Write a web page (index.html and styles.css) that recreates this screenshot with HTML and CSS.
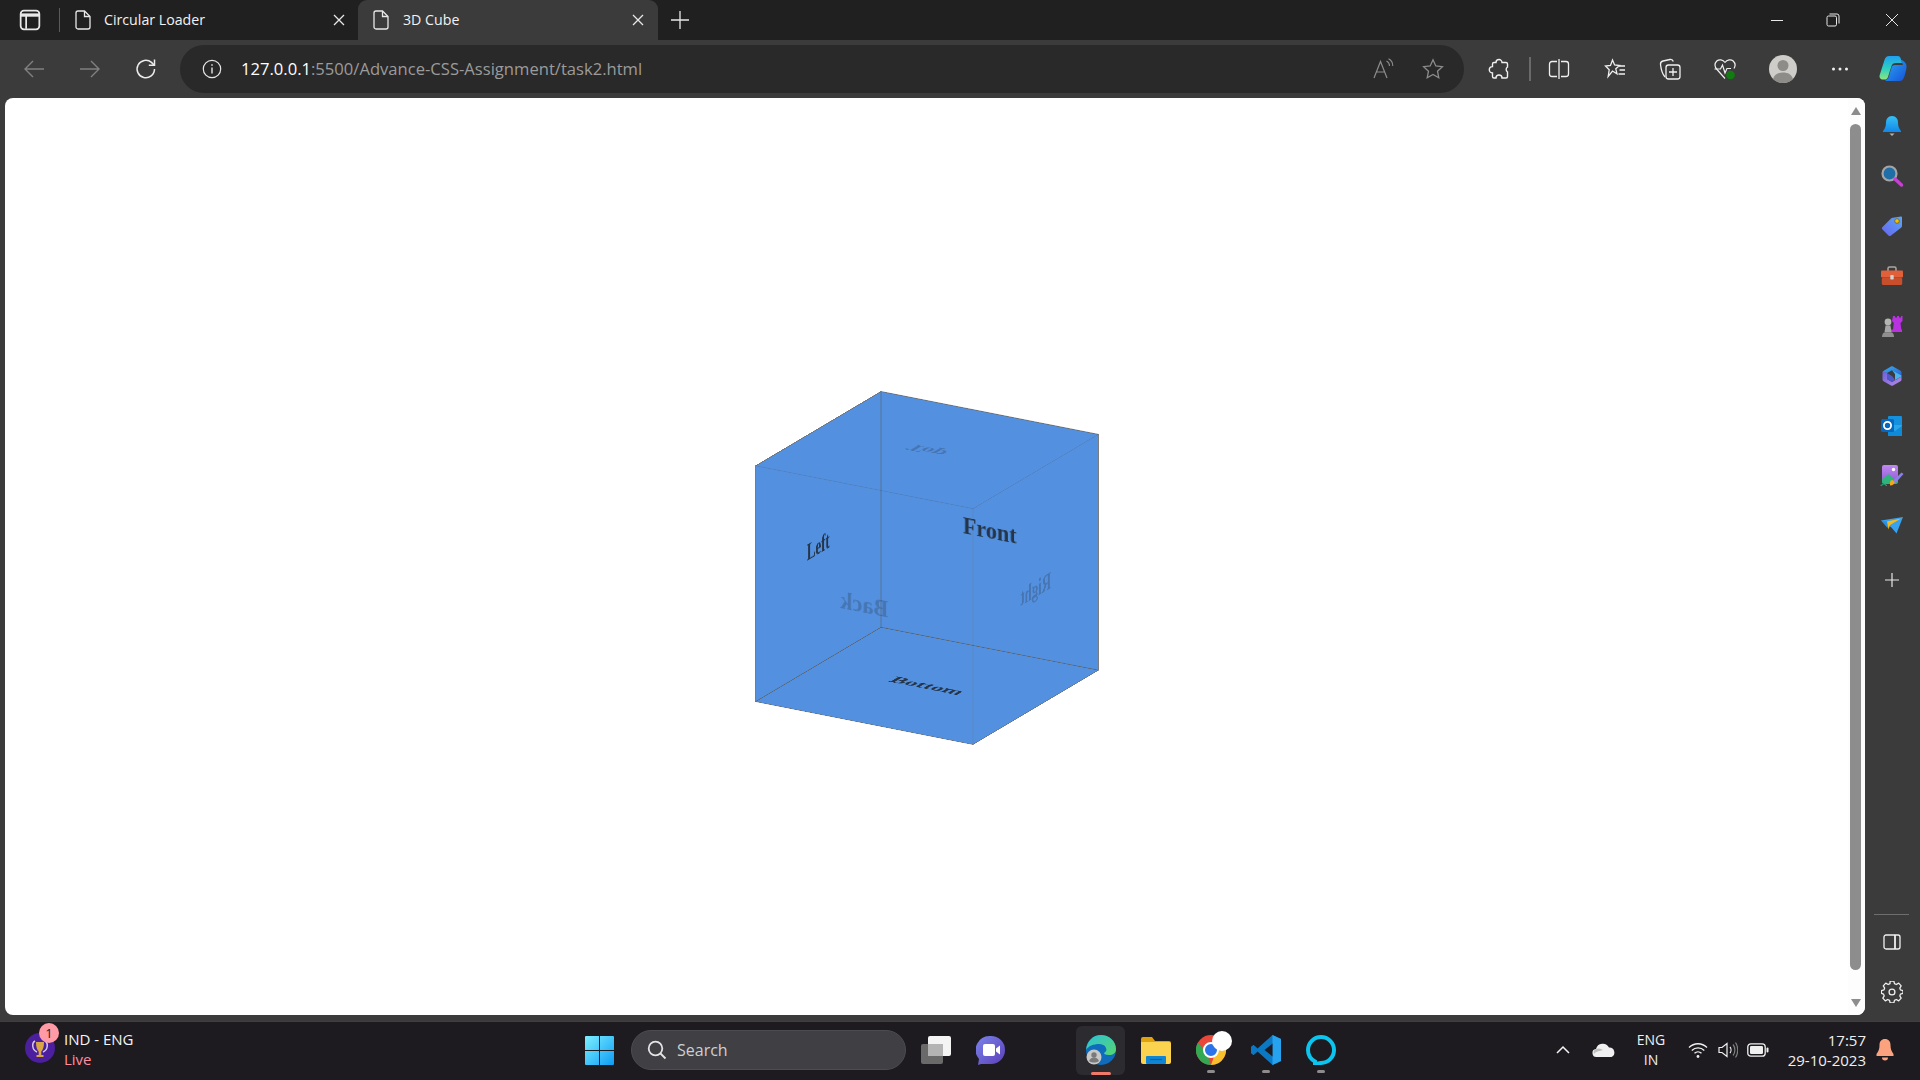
FILE: index.html
```html
<!DOCTYPE html>
<html lang="en">
<head>
<meta charset="utf-8">
<title>3D Cube</title>
<link rel="stylesheet" href="styles.css">
</head>
<body>
<header class="tabstrip">
  <div class="tabstrip-left">
    <svg class="ic22" viewBox="0 0 20 20" fill="none" stroke="#e8e8e8" stroke-width="1.6"><rect x="1.5" y="1.5" width="17" height="17" rx="3"/><path d="M1.5 5.5h17" stroke-width="3"/><path d="M6.5 6v12"/></svg>
    <span class="tab-sep"></span>
  </div>
  <div class="tab">
    <svg class="file" viewBox="0 0 16 20" fill="none" stroke="#e8e8e8" stroke-width="1.3"><path d="M3 1h6.5L15 6.5V17a2 2 0 0 1-2 2H3a2 2 0 0 1-2-2V3a2 2 0 0 1 2-2z"/><path d="M9.5 1v5.5H15"/></svg>
    <span class="tab-title">Circular Loader</span>
    <svg class="tab-close" viewBox="0 0 12 12" stroke="#e8e8e8" stroke-width="1.3"><path d="M1 1l10 10M11 1L1 11"/></svg>
  </div>
  <div class="tab active">
    <svg class="file" viewBox="0 0 16 20" fill="none" stroke="#e8e8e8" stroke-width="1.3"><path d="M3 1h6.5L15 6.5V17a2 2 0 0 1-2 2H3a2 2 0 0 1-2-2V3a2 2 0 0 1 2-2z"/><path d="M9.5 1v5.5H15"/></svg>
    <span class="tab-title">3D Cube</span>
    <svg class="tab-close" viewBox="0 0 12 12" stroke="#e8e8e8" stroke-width="1.3"><path d="M1 1l10 10M11 1L1 11"/></svg>
  </div>
  <svg class="new-tab" viewBox="0 0 18 18" stroke="#e8e8e8" stroke-width="1.3"><path d="M9 0v18M0 9h18"/></svg>
  <div class="window-controls">
    <svg class="wc" viewBox="0 0 14 14" stroke="#e8e8e8" stroke-width="1"><path d="M1 7.5h12"/></svg>
    <svg class="wc wc-restore" viewBox="0 0 14 14" fill="none" stroke="#e8e8e8" stroke-width="1"><rect x="1" y="3" width="9.5" height="10" rx="1.5"/><path d="M3.5 1h7.5a2 2 0 0 1 2 2v7.5"/></svg>
    <svg class="wc" viewBox="0 0 14 14" stroke="#e8e8e8" stroke-width="1"><path d="M1 1l12 12M13 1L1 13"/></svg>
  </div>
</header>

<nav class="toolbar">
  <div class="nav-btn"><svg class="ic22" viewBox="0 0 22 22" fill="none" stroke="#808080" stroke-width="1.4"><path d="M21 11H2M10 3l-8 8 8 8"/></svg></div>
  <div class="nav-btn"><svg class="ic22" viewBox="0 0 22 22" fill="none" stroke="#808080" stroke-width="1.4"><path d="M1 11h19M12 3l8 8-8 8"/></svg></div>
  <div class="nav-btn"><svg class="ic22" viewBox="0 0 22 22" fill="none" stroke="#ececec" stroke-width="1.5"><path d="M19.5 11A8.7 8.7 0 1 1 16.5 4.4L19 7"/><path d="M19.5 1.5V7.2h-5.7"/></svg></div>
  <div class="address">
    <svg class="ic20" viewBox="0 0 20 20" fill="none" stroke="#e6e6e6" stroke-width="1.2"><circle cx="10" cy="10" r="8.7"/><path d="M10 8.5v6" stroke-width="1.4"/><path d="M10 5.2v1.6" stroke-width="1.5"/></svg>
    <span class="url"><span class="url-host">127.0.0.1</span>:5500/Advance-CSS-Assignment/task2.html</span>
    <svg class="ic22 read" viewBox="0 0 22 22" fill="none" stroke="#8c8c8c" stroke-width="1.2"><path d="M2 20L8.500 3.500 15 20M4.500 14h8"/><path d="M14.500 3c2 1 3 3 3 5M16.500 0.800c2.800 1.400 4.300 4 4.300 7.200" stroke-width="1.100"/></svg>
    <svg class="ic22 fav" viewBox="0 0 22 22" fill="none" stroke="#8c8c8c" stroke-width="1.3"><path d="M11 1.800l2.800 6.100 6.600.8-4.900 4.500 1.300 6.600L11 16.500l-5.800 3.300 1.300-6.600-4.900-4.500 6.600-.8z"/></svg>
  </div>
  <div class="tools">
    <div class="tool"><svg class="ic22" viewBox="0 0 22 22" fill="none" stroke="#f0f0f0" stroke-width="1.400"><path d="M8 4.500a3 3 0 0 1 6 0H18a1.500 1.500 0 0 1 1.500 1.500V9a3 3 0 0 0 0 5v4.500A1.500 1.500 0 0 1 18 20h-4a3 3 0 0 0-6 0H6a1.500 1.500 0 0 1-1.500-1.500V15a3.200 3.200 0 0 1 0-6.400V6A1.500 1.500 0 0 1 6 4.500z"/></svg></div>
    <span class="tool-sep"></span>
    <div class="tool m8"><svg class="ic22" viewBox="0 0 22 22" fill="none" stroke="#f0f0f0" stroke-width="1.300"><path d="M9 3.500H4A2.500 2.500 0 0 0 1.500 6v10A2.500 2.500 0 0 0 4 18.500h5M13 3.500h5A2.500 2.500 0 0 1 20.500 6v10a2.500 2.500 0 0 1-2.500 2.500h-5M11 1v20"/></svg></div>
    <div class="tool m16"><svg class="ic22" viewBox="0 0 22 22" fill="none" stroke="#f0f0f0" stroke-width="1.300"><path d="M8.500 2l2.100 5 5 .5-3.800 3.300 1.200 5L8.500 13 4.200 18.500l1-6.700L1.500 8l5-.5z"/><path d="M15 8h6M15.500 12h5.500M14.500 16h6.500"/></svg></div>
    <div class="tool m15"><svg class="ic22" viewBox="0 0 22 22" fill="none" stroke="#f0f0f0" stroke-width="1.300"><path d="M6 19C3 15.500 2 11 1.500 6.500 1.300 4.500 2.500 3.300 4 3l7-1.500c1.500-.3 2.800.5 3.300 2"/><rect x="7" y="7" width="14" height="14" rx="2.500"/><path d="M14 10v8M10 14h8"/></svg></div>
    <div class="tool m15"><svg class="ic24" viewBox="0 0 24 24" fill="none" stroke="#f0f0f0" stroke-width="1.200"><path d="M12 5.500C10 2.500 6 2 3.800 4 1.200 6.500 1.500 10 4 12.500l8 9"/><path d="M12 5.500C14 2.500 18 2 20.200 4c2.300 2.200 2.300 5 .8 7.500"/><path d="M1.500 12h6l2-4 2.500 8 2-4.500h4"/><circle cx="17.500" cy="18" r="4.300" fill="#107c10" stroke="none"/></svg></div>
    <div class="tool m18"><span class="avatar"><svg viewBox="0 0 28 28" class="avatar-svg"><circle cx="14" cy="14" r="14" fill="#cfcdc9"/><circle cx="14" cy="10.500" r="5.500" fill="#8e8c88"/><path d="M4 24c1.500-4.500 5-6.500 10-6.500s8.500 2 10 6.500c-2.500 2.500-6 4-10 4s-7.500-1.500-10-4z" fill="#8e8c88"/></svg></span></div>
    <div class="tool m17"><svg class="ic22" viewBox="0 0 22 22" fill="#f0f0f0"><circle cx="4.500" cy="11" r="1.500"/><circle cx="11" cy="11" r="1.500"/><circle cx="17.500" cy="11" r="1.500"/></svg></div>
    <div class="tool m13"><svg class="ic30" viewBox="0 0 30 30"><defs><linearGradient id="cp1" x1="0" y1="0" x2="0" y2="1"><stop offset="0" stop-color="#1ea0f0"/><stop offset=".55" stop-color="#2fd0c0"/><stop offset="1" stop-color="#8fe47e"/></linearGradient><linearGradient id="cp2" x1="0" y1="0" x2="1" y2="1"><stop offset="0" stop-color="#2aa8f5"/><stop offset="1" stop-color="#1752d8"/></linearGradient></defs><path d="M23 6c1 0 5 2 5.500 5.500.3 3-1 7-2 10.500-.8 3-2.300 5-5 5H9c-1 0-1.500-.5-1.800-1.500 1.500.3 2.800-.5 3.300-2l3-10c.5-1.600 1.500-2.500 3.500-2.500h8L23 6z" fill="url(#cp2)"/><path d="M11 2h9c1.500 0 2.300 1 2.700 2.400L24 9H18c-2.500 0-4 1-4.700 3.500L10 23c-.5 1.500-1.500 2.500-3 2.500H5c-2.500 0-4-1.800-3.300-4.500L6.500 6C7.300 3.300 8.800 2 11 2z" fill="url(#cp1)"/></svg></div>
  </div>
</nav>

<div class="main">
  <main class="page">
    <section class="stage">
      <div class="cube">
        <div class="face front">Front</div>
        <div class="face back">Back</div>
        <div class="face right">Right</div>
        <div class="face left">Left</div>
        <div class="face top">Top</div>
        <div class="face bottom">Bottom</div>
      </div>
    </section>
    <aside class="scrollbar">
      <span class="arrow-up"></span>
      <span class="thumb"></span>
      <span class="arrow-down"></span>
    </aside>
  </main>
  <aside class="sidebar">
    <div class="side-btn"><svg class="ic24" viewBox="0 0 24 24"><defs><linearGradient id="bell" x1="0" y1="0" x2="0" y2="1"><stop offset="0" stop-color="#35c1f5"/><stop offset="1" stop-color="#1287e8"/></linearGradient></defs><path d="M12 2c4 0 6 3 6 6.500 0 4 1 6 3 8.500v1H3v-1c2-2.500 3-4.500 3-8.500C6 5 8 2 12 2z" fill="url(#bell)"/><path d="M9.500 19.500h5L12 22z" fill="#b4b4b4"/></svg></div>
    <div class="side-btn"><svg class="ic24" viewBox="0 0 24 24"><circle cx="9.500" cy="9.500" r="7" fill="#1f6ea8" stroke="#a5a5a5" stroke-width="2.200"/><path d="M15 15l6.500 6" stroke="#c83fd4" stroke-width="3.400" stroke-linecap="round"/></svg></div>
    <div class="side-btn"><svg class="ic24" viewBox="0 0 24 24"><defs><linearGradient id="tag" x1="0" y1="1" x2="1" y2="0"><stop offset="0" stop-color="#6a63ef"/><stop offset="1" stop-color="#57a8f5"/></linearGradient></defs><path d="M11 21.500c-.8.800-1.800.800-2.500 0L2.500 15.500c-.8-.8-.8-1.800 0-2.500L11 4.500c.5-.5 1-.7 1.700-.7L21 2.500c.6 0 1 .4 1 1v8.500c0 .6-.2 1.200-.7 1.600z" fill="url(#tag)"/><circle cx="17" cy="7" r="2.300" fill="#f2c200" stroke="#7a5c10" stroke-width=".8"/></svg></div>
    <div class="side-btn"><svg class="ic24" viewBox="0 0 24 24"><path d="M8 7V4.500C8 3.500 8.500 3 9.500 3h5c1 0 1.500.5 1.500 1.500V7" fill="none" stroke="#a8a8a8" stroke-width="1.500"/><rect x="1" y="6.500" width="22" height="7" rx="1" fill="#e0603a"/><rect x="1.800" y="13.500" width="20.400" height="7.500" rx="1.500" fill="#c94e2c"/><rect x="10.300" y="11" width="3.400" height="4.500" rx=".7" fill="#d2d2d2"/></svg></div>
    <div class="side-btn"><svg class="ic24" viewBox="0 0 24 24"><path d="M14 3h2v1.500h2V3h2v1.500h2V3h1.500v5l-2 2 .8 6.500H23v2.500H12v-2.500h2l.8-6.500-1.800-2z" fill="#b832e0" transform="translate(-1 -1)"/><circle cx="8" cy="8" r="3.400" fill="#b4b4b4"/><path d="M5.500 11.500h5l1 7h-7z" fill="#a6a6a6"/><path d="M2 23c0-2.500 1-4.500 3-4.500h6c2 0 3 2 3 4.500z" fill="#8f8f8f"/></svg></div>
    <div class="side-btn"><svg class="ic24" viewBox="0 0 24 24"><defs><linearGradient id="b1" x1="0" y1="0" x2="1" y2="1"><stop offset="0" stop-color="#38b0ee"/><stop offset="1" stop-color="#2a60d8"/></linearGradient><linearGradient id="b2" x1="0" y1="0" x2="1" y2="1"><stop offset="0" stop-color="#6b5fdc"/><stop offset="1" stop-color="#b98ae4"/></linearGradient></defs><path d="M11 2.500c.7-.4 1.300-.4 2 0l7.500 4.300c.7.400 1 1 1 1.700v3.500L15 8l-3-1.800L7 9 2.500 7.500z" fill="url(#b1)"/><path d="M2.500 8.500c0-.6.300-1 .7-1.300L7 9v6l5 3 9.500-5.500v3c0 .7-.3 1.300-1 1.700L13 21.500c-.7.400-1.300.4-2 0l-7.500-4.300c-.7-.4-1-1-1-1.700z" fill="url(#b2)"/><path d="M12 6.200l9.500 5.200v1.100l-6.500 3.600V10z" fill="#49b4ee"/><path d="M7 9l5 3 3 3.800-3 2.200-5-3z" fill="#4e58c8"/></svg></div>
    <div class="side-btn"><svg class="ic24" viewBox="0 0 24 24"><rect x="8" y="2" width="14" height="11" rx="1" fill="#1490df"/><rect x="8" y="11" width="14" height="11" rx="1" fill="#28a8ea"/><path d="M8 12l7 5 7-5v9a1 1 0 0 1-1 1H9a1 1 0 0 1-1-1z" fill="#0f8ad8"/><rect x="1" y="5" width="13" height="13" rx="1.500" fill="#0467c0"/><circle cx="7.500" cy="11.500" r="3.600" fill="none" stroke="#fff" stroke-width="1.800"/></svg></div>
    <div class="side-btn"><svg class="ic24" viewBox="0 0 24 24"><defs><linearGradient id="d1" x1="0" y1="0" x2="0" y2="1"><stop offset="0" stop-color="#c088f0"/><stop offset="1" stop-color="#8f58d8"/></linearGradient></defs><rect x="2" y="1" width="16" height="18" rx="2" fill="url(#d1)"/><path d="M2 15l6-5 5 4 5 3v1a2 2 0 0 1-2 2H4a2 2 0 0 1-2-2z" fill="#2fb57c"/><circle cx="13.500" cy="5.500" r="1.700" fill="#fff"/><path d="M12 18L21.500 8.500l2 1.500-8.500 9.500z" fill="#8a80ea"/><path d="M10 19c0-2 1-3 2.500-3l2 2c0 2-1.500 3.500-4.500 3.500z" fill="#f2a81d"/><path d="M0.500 21.500c1.500 0 2-1.500 3.500-1.500s1.500 1.500 3 1.500" fill="none" stroke="#1fa26f" stroke-width="1.100"/></svg></div>
    <div class="side-btn"><svg class="ic24" viewBox="0 0 24 24"><path d="M1 6.500L23 3l-6.500 16.500-5-6z" fill="#39a2f0"/><path d="M1 6.500l9.500 2-3 5.500z" fill="#2a8fdf"/><path d="M7 7.500L21 4.500 10 11l-1.500 4.500L7.500 10z" fill="#f5bb1e"/></svg></div>
    <div class="side-btn plus"><svg class="ic16" viewBox="0 0 16 16" stroke="#e8e8e8" stroke-width="1.200"><path d="M8 1v14M1 8h14"/></svg></div>
    <div class="side-bottom">
      <span class="side-line"></span>
      <div class="side-btn"><svg class="ic18" viewBox="0 0 18 18" fill="none" stroke="#f0f0f0" stroke-width="1.300"><rect x="1" y="2" width="16" height="14" rx="2"/><path d="M12 2v14" stroke-width="1.800"/></svg></div>
      <div class="side-btn"><svg class="ic22" viewBox="0 0 24 24" fill="none" stroke="#f0f0f0" stroke-width="1.400" stroke-linejoin="round"><path d="M10 1.500h4l.7 2.900 2 .9 2.600-1.500 2.700 3-1.500 2.400.7 2 2.800.8v3l-2.800.8-.7 2 1.500 2.400-2.700 3-2.600-1.500-2 .9-.7 2.900h-4l-.7-2.900-2-.9-2.600 1.500-2.700-3 1.500-2.400-.7-2L.5 15v-3l2.800-.8.700-2L2.500 6.800l2.700-3 2.600 1.500 2-.9z" transform="translate(0 -1.500)"/><circle cx="12" cy="12" r="3.200"/></svg></div>
    </div>
  </aside>
</div>

<footer class="taskbar">
  <div class="widget">
    <div class="widget-icon">
      <svg class="ic30" viewBox="0 0 30 30"><circle cx="15" cy="15" r="15" fill="#4b1f9e"/><path d="M11 9h8c0 5-1 8-2.700 9.500V22h2.200v2h-7v-2h2.200v-3.500C12 17 11 14 11 9z" fill="#d9a545"/><path d="M10 8c-3.500 2-3 9 2 11M20 8c3.500 2 3 9-2 11" fill="none" stroke="#d8c7e8" stroke-width="1.500"/></svg>
      <span class="badge">1</span>
    </div>
    <div class="widget-text">
      <span class="widget-title">IND - ENG</span>
      <span class="widget-live">Live</span>
    </div>
  </div>
  <svg class="win" viewBox="0 0 29 29"><defs><linearGradient id="w1" x1="0" y1="0" x2="1" y2="1"><stop offset="0" stop-color="#7df0ff"/><stop offset="1" stop-color="#0d9bf5"/></linearGradient></defs><path d="M0 1a1 1 0 0 1 1-1h13v14H0zM15 0h13a1 1 0 0 1 1 1v13H15zM0 15h14v14H1a1 1 0 0 1-1-1zM15 15h14v13a1 1 0 0 1-1 1H15z" fill="url(#w1)"/></svg>
  <div class="search">
    <svg class="ic20" viewBox="0 0 20 20" fill="none" stroke="#e4e4e4" stroke-width="1.800"><circle cx="8.500" cy="8.500" r="6.800"/><path d="M13.500 13.500l5 5"/></svg>
    <span class="search-text">Search</span>
  </div>
  <svg class="taskview" viewBox="0 0 30 28"><rect x="0" y="8" width="22" height="20" rx="2" fill="#6a6a6a"/><rect x="7" y="0" width="23" height="20" rx="2" fill="#f4f4f4"/><rect x="7" y="8" width="15" height="12" fill="#b4b4b4"/></svg>
  <svg class="meet" viewBox="0 0 30 30"><defs><linearGradient id="m1" x1="0" y1="0" x2="1" y2="1"><stop offset="0" stop-color="#7b83eb"/><stop offset="1" stop-color="#5b3fb8"/></linearGradient></defs><path d="M15 1a14 14 0 1 1 0 28H5l-3 1 1-6A14 14 0 0 1 15 1z" fill="url(#m1)"/><rect x="7" y="9" width="12" height="12" rx="2" fill="#fff"/><path d="M20 13.500l4-3v9l-4-3z" fill="#fff"/></svg>
  <div class="app active-app">
    <svg class="ic30" viewBox="0 0 30 30"><defs><linearGradient id="e1" x1="0" y1="0" x2="1" y2="1"><stop offset="0" stop-color="#2dc1d8"/><stop offset="1" stop-color="#56d66e"/></linearGradient></defs><circle cx="15" cy="15" r="15" fill="#0f6cbd"/><path d="M0 15C1 6 7 0 15 0c8 0 15 6 15 14 0 4-3 6-7 6-3 0-5-1-5-2 2-1 3-3 2-5-1-3-4-4-7-4C8 9 2 11 0 15z" fill="url(#e1)"/><circle cx="8" cy="22" r="7.500" fill="#c8c8c8"/><circle cx="8" cy="20" r="2.700" fill="#7a7a7a"/><path d="M3 26c1-2.500 3-3.500 5-3.500s4 1 5 3.500c-3 2-7 2-10 0z" fill="#7a7a7a"/></svg>
    <span class="app-underline"></span>
  </div>
  <div class="app m16b">
    <svg class="folder" viewBox="0 0 30 27"><path d="M0 2a2 2 0 0 1 2-2h9l3 4h14a2 2 0 0 1 2 2v4H0z" fill="#e0a310"/><path d="M0 5h28a2 2 0 0 1 2 2v18a2 2 0 0 1-2 2H2a2 2 0 0 1-2-2z" fill="#fcd34e"/><rect x="5" y="19" width="20" height="8" rx="1" fill="#0f86d4"/><path d="M9 22.500h12" stroke="#0a5ea6" stroke-width="1.200"/></svg>
  </div>
  <div class="app m25">
    <svg class="ic30" viewBox="0 0 30 30"><circle cx="15" cy="15" r="15" fill="#e9473a"/><path d="M15 30A15 15 0 0 1 2 7.500L11 19z" fill="#32a852"/><path d="M15 30a15 15 0 0 0 13-22.500H15L19 19z" fill="#f9c02d"/><circle cx="15" cy="15" r="7" fill="#2a73e8" stroke="#fff" stroke-width="2"/></svg>
    <span class="blob"></span>
    <span class="app-dot"></span>
  </div>
  <div class="app m25">
    <svg class="ic30" viewBox="0 0 30 30"><path d="M21.500 0L30 4v22l-8.500 4-15-13.500L2.500 20 0 18v-6l2.500-2 4 3.500z" fill="#0b78c4"/><path d="M21.500 0L30 4v22l-8.500 4V0z" fill="#27a2ef"/><path d="M21.500 8.500l-8 6.500 8 6.500z" fill="#1e1c21"/><path d="M0 12l2.500-2 4 3.500-3 1.500 3 1.500-4 3.500L0 18z" fill="#0b78c4"/></svg>
    <span class="app-dot"></span>
  </div>
  <div class="app m25">
    <svg class="ic30" viewBox="0 0 30 30" fill="none"><path d="M9 26.500C4.500 24 2 20 2 15A13 13 0 1 1 15 28l-6 1z" stroke="#0cc4ee" stroke-width="4"/></svg>
    <span class="app-dot"></span>
  </div>
  <svg class="chevron" viewBox="0 0 16 10" fill="none" stroke="#f4f4f4" stroke-width="1.500"><path d="M2 8l6-6 6 6"/></svg>
  <svg class="cloud" viewBox="0 0 24 16"><path d="M5 15a4 4 0 0 1-1-8 7 7 0 0 1 13-1.500A5 5 0 0 1 19.500 15z" fill="#f0f0f0"/><path d="M2 12a4 4 0 0 1 2-5 7 7 0 0 1 7 1c-3 1-7 1-9 4z" fill="#bdbdbd"/></svg>
  <div class="lang"><span>ENG</span><span>IN</span></div>
  <svg class="wifi" viewBox="0 0 20 18" fill="none" stroke="#f0f0f0" stroke-width="1.300"><path d="M1 6.500c5-5 13-5 18 0M3.800 9.500c3.500-3.500 9-3.500 12.500 0M6.500 12.300c2-2 5-2 7 0"/><circle cx="10" cy="15.500" r="1.400" fill="#f0f0f0" stroke="none"/></svg>
  <svg class="speaker" viewBox="0 0 20 18" fill="none" stroke="#f0f0f0" stroke-width="1.200"><path d="M1 6.500h3L9 2.500v13L4 11.500H1z"/><path d="M12 6c1.300 1.600 1.300 4.400 0 6"/><path d="M15 3.500c2.500 3 2.500 8 0 11M17.500 1.500c3 4.200 3 10.800 0 15" stroke="#7f7f7f"/></svg>
  <svg class="battery" viewBox="0 0 22 14"><rect x=".8" y=".8" width="17.400" height="12.400" rx="3" fill="none" stroke="#f0f0f0" stroke-width="1.300"/><rect x="3" y="3" width="13" height="8" rx="1.300" fill="#f0f0f0"/><rect x="19.500" y="4.500" width="2" height="5" rx="1" fill="#f0f0f0"/></svg>
  <div class="clock"><span>17:57</span><span>29-10-2023</span></div>
  <svg class="notif" viewBox="0 0 20 22"><path d="M10 0c3.500 0 5.500 2.500 5.500 6 0 4 1 6.500 3 9v2H1.500v-2c2-2.500 3-5 3-9C4.500 2.500 6.500 0 10 0z" fill="#fba27f"/><path d="M7 18.500h6c0 2-1 3-3 3s-3-1-3-3z" fill="#fba27f"/></svg>
</footer>
</body>
</html>
```

FILE: styles.css
```css
* { box-sizing: border-box; }
html, body { height: 100%; }
body {
  margin: 0;
  display: flex;
  flex-direction: column;
  height: 1080px;
  overflow: hidden;
  background: #3b3b3b;
  font-family: "Open Sans", "Noto Sans", sans-serif;
  color: #f0f0f0;
}
svg { display: block; flex: none; }
.ic16 { width: 16px; height: 16px; }
.ic18 { width: 18px; height: 18px; }
.ic20 { width: 20px; height: 20px; }
.ic22 { width: 22px; height: 22px; }
.ic24 { width: 24px; height: 24px; }
.ic30 { width: 30px; height: 30px; }

/* tab strip */
.tabstrip { height: 40px; flex: none; display: flex; align-items: stretch; background: #202020; }
.tabstrip-left { width: 64px; padding-left: 19px; display: flex; align-items: center; gap: 18px; }
.tab-sep { width: 1px; height: 24px; background: #5a5a5a; }
.tab { width: 294px; display: flex; align-items: center; padding: 0 13px 0 11px; font-size: 14.2px; }
.tab.active { width: 300px; padding: 0 14px 0 15px; background: #3b3b3b; border-radius: 9px 9px 0 0; }
.file { width: 16px; height: 20px; }
.tab-title { margin-left: 13px; padding-bottom: 2px; flex: 1; white-space: nowrap; color: #f2f2f2; }
.active .tab-title { margin-left: 14px; }
.tab-close { width: 12px; height: 12px; }
.new-tab { width: 18px; height: 18px; align-self: center; margin-left: 13px; }
.window-controls { margin-left: auto; display: flex; align-items: center; gap: 42px; padding-right: 21px; }
.wc { width: 14px; height: 14px; }
.wc-restore { margin-right: 3px; }

/* toolbar */
.toolbar { height: 58px; flex: none; display: flex; align-items: flex-start; padding: 5px 0 0 6px; background: #3b3b3b; }
.nav-btn { width: 56px; height: 48px; display: flex; align-items: center; justify-content: center; }
.address { width: 1284px; height: 48px; margin-left: 6px; padding-left: 22px; border-radius: 24px; background: #292929; display: flex; align-items: center; }
.url { margin-left: 19px; font-size: 16.6px; color: #9b9b9b; white-space: nowrap; position: relative; top: -1px; }
.url-host { color: #fff; }
.read { margin-left: auto; }
.fav { margin-left: 28px; margin-right: 20px; }
.tools { display: flex; align-items: center; height: 48px; margin-left: 15px; }
.tool { width: 40px; height: 48px; display: flex; align-items: center; justify-content: center; }
.tool-sep { width: 2px; height: 24px; margin-left: 10px; background: #6a6a6a; }
.m8 { margin-left: 8px; }
.m13 { margin-left: 13px; }
.m15 { margin-left: 15px; }
.m16 { margin-left: 16px; }
.m17 { margin-left: 17px; }
.m18 { margin-left: 18px; }
.avatar-svg { width: 28px; height: 28px; }

/* main area */
.main { flex: 1; min-height: 0; display: flex; padding: 0 0 6px 5px; }
.page { flex: 1; min-width: 0; display: flex; background: #fff; border-radius: 8px; overflow: hidden; }
.stage { flex: 1; display: flex; align-items: center; justify-content: center; padding-top: 23px; }
.cube { position: relative; width: 252px; height: 252px; transform-style: preserve-3d; transform: rotateX(20deg) rotateY(30deg); }
.face {
  position: absolute;
  inset: 0;
  display: flex;
  align-items: center;
  justify-content: center;
  background: #4185dd;
  border: 1px solid #555;
  opacity: .7;
  color: #000;
  font: bold 25.6px "Liberation Serif", "Times New Roman", serif;
}
.front { transform: translateZ(125.500px); }
.back { transform: rotateY(180deg) translateZ(125.500px); }
.right { transform: rotateY(90deg) translateZ(125.500px); }
.left { transform: rotateY(-90deg) translateZ(125.500px); }
.top { transform: rotateX(90deg) translateZ(125.500px); }
.bottom { transform: rotateX(-90deg) translateZ(125.500px); }

.scrollbar { width: 17px; display: flex; flex-direction: column; align-items: center; background: #fdfdfd; padding: 9px 2px 8px 0; }
.thumb { width: 11px; flex: 1; margin: 9px 0 29px; background: #8d8d8d; border-radius: 6px; }
.arrow-up { width: 0; height: 0; border: 5.5px solid transparent; border-top: 0; border-bottom: 8px solid #8d8d8d; }
.arrow-down { width: 0; height: 0; border: 5.5px solid transparent; border-bottom: 0; border-top: 8px solid #8d8d8d; }

.sidebar { width: 55px; flex: none; display: flex; flex-direction: column; align-items: center; padding: 3px 2px 3px 0; margin-bottom: -5px; }
.side-btn { width: 100%; height: 50px; display: flex; align-items: center; justify-content: center; }
.side-btn.plus { margin-top: 4px; }
.side-bottom { margin-top: auto; width: 100%; display: flex; flex-direction: column; align-items: center; }
.side-line { width: 35px; height: 1px; margin-bottom: 2px; background: #6e6e6e; }

/* taskbar */
.taskbar { height: 59px; flex: none; display: flex; align-items: center; padding: 0 0 2px 25px; background: #1d1b20; border-top: 1px solid #3f3f3f; font-size: 14px; }
.widget { width: 560px; display: flex; align-items: center; }
.widget-icon { position: relative; width: 30px; height: 30px; margin-top: -4px; }
.badge { position: absolute; left: 14px; top: -10px; width: 20px; height: 20px; border-radius: 50%; background: #ff9aa6; color: #1a1a1a; font-size: 13px; line-height: 20px; text-align: center; }
.widget-text { display: flex; flex-direction: column; margin-left: 9px; line-height: 20px; margin-top: -3px; font-size: 15px; }
.widget-title { color: #f4f4f4; }
.widget-live { color: #ff8d9c; }
.win { width: 29px; height: 29px; }
.search { width: 275px; height: 40px; margin-left: 17px; padding-left: 15px; display: flex; align-items: center; border-radius: 20px; background: #403f44; border: 1px solid #4c4b50; }
.search-text { margin-left: 10px; font-size: 16px; color: #cfcfcf; }
.taskview { width: 30px; height: 28px; margin-left: 15px; }
.meet { width: 30px; height: 30px; margin-left: 25px; }
.app { position: relative; width: 30px; height: 49px; display: flex; align-items: center; justify-content: center; }
.active-app { width: 49px; margin-left: 70px; background: #2c2b30; border-radius: 6px; }
.m16b { margin-left: 16px; }
.m25 { margin-left: 25px; }
.folder { width: 30px; height: 27px; }
.app-underline { position: absolute; left: 15px; bottom: 0; width: 20px; height: 3px; border-radius: 2px; background: #f0796a; }
.app-dot { position: absolute; left: 11px; bottom: 2px; width: 8px; height: 3px; border-radius: 2px; background: #8c8c8c; }
.blob { position: absolute; left: 16px; top: 5px; width: 20px; height: 20px; border-radius: 50%; background: #fff; }
.chevron { width: 16px; height: 10px; margin-left: 219px; }
.cloud { width: 24px; height: 16px; margin-left: 21px; }
.lang { width: 40px; margin-left: 15px; display: flex; flex-direction: column; align-items: center; line-height: 20px; }
.wifi { width: 20px; height: 18px; margin-left: 17px; }
.speaker { width: 20px; height: 18px; margin-left: 10px; }
.battery { width: 22px; height: 14px; margin-left: 9px; }
.clock { width: 90px; margin-left: 7px; display: flex; flex-direction: column; align-items: flex-end; line-height: 20px; white-space: nowrap; font-size: 15px; }
.notif { width: 20px; height: 22px; margin-left: 9px; }
```
